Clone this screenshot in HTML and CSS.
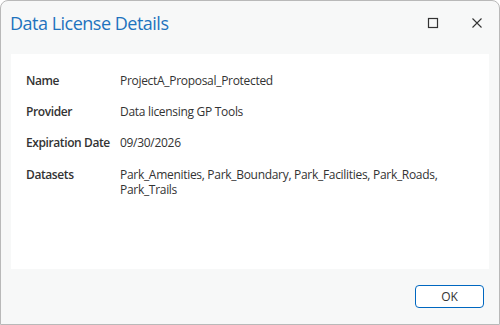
FILE: index.html
```html
<!DOCTYPE html>
<html lang="en">
<head>
  <meta charset="UTF-8" />
  <title>Data License Details</title>
  <link rel="stylesheet" href="styles.css">
</head>
<body>
  <div class="window">
    <div class="title-bar">
      <h1>Data License Details</h1>
      <div class="window-buttons">
        <span class="win-btn">
          <svg width="12" height="12" viewBox="0 0 12 12"><rect x="1.5" y="1.5" width="9" height="9" fill="none" stroke="#333" stroke-width="1.2"/></svg>
        </span>
        <span class="win-btn">
          <svg width="12" height="12" viewBox="0 0 12 12"><path d="M1.5 1.5 L10.5 10.5 M10.5 1.5 L1.5 10.5" stroke="#333" stroke-width="1.1"/></svg>
        </span>
      </div>
    </div>

    <div class="details">
      <div class="label">Name</div>
      <div class="value">ProjectA_Proposal_Protected</div>

      <div class="label">Provider</div>
      <div class="value">Data licensing GP Tools</div>

      <div class="label">Expiration Date</div>
      <div class="value">09/30/2026</div>

      <div class="label">Datasets</div>
      <div class="value">Park_Amenities, Park_Boundary, Park_Facilities, Park_Roads, Park_Trails</div>
    </div>

    <div class="footer">
      <button class="btn-ok">OK</button>
    </div>
  </div>
</body>
</html>
```

FILE: styles.css
```css
* {
  box-sizing: border-box;
  margin: 0;
  padding: 0;
}

body {
  font-family: 'Open Sans', 'Noto Sans', sans-serif;
  background: #ffffff;
  width: 500px;
  height: 325px;
}

.window {
  width: 500px;
  height: 325px;
  background: #f7f8f8;
  border: 1px solid #b9b9b9;
  border-radius: 8px 8px 0 0;
  display: flex;
  flex-direction: column;
}

.title-bar {
  height: 53px;
  display: flex;
  justify-content: space-between;
  align-items: flex-start;
  padding: 10px 0 0 9px;
}

h1 {
  font-size: 18px;
  font-weight: 400;
  color: #1e73be;
  letter-spacing: -0.5px;
}

.window-buttons {
  display: flex;
  padding-top: 6px;
}

.win-btn {
  width: 44px;
  height: 12px;
  display: flex;
  justify-content: center;
}

.details {
  margin: 0 10px;
  height: 215px;
  background: #ffffff;
  padding: 19px 15px 0 15px;
  display: grid;
  grid-template-columns: 94px 345px;
  row-gap: 16px;
  align-content: start;
  font-size: 12px;
  line-height: 15px;
  letter-spacing: -0.3px;
  color: #333;
}

.label {
  font-weight: 600;
  letter-spacing: -0.4px;
}

.label:nth-last-child(2) {
  padding-top: 1px;
}

.value:last-child {
  padding-top: 1px;
}

.footer {
  flex: 1;
  display: flex;
  justify-content: flex-end;
  align-items: flex-start;
  padding: 16px 15px 0 0;
}

.btn-ok {
  width: 69px;
  height: 23px;
  background: #ffffff;
  border: 1px solid #0067c0;
  border-radius: 4px;
  font-family: 'Open Sans', 'Noto Sans', sans-serif;
  font-size: 12px;
  color: #333;
}
```
